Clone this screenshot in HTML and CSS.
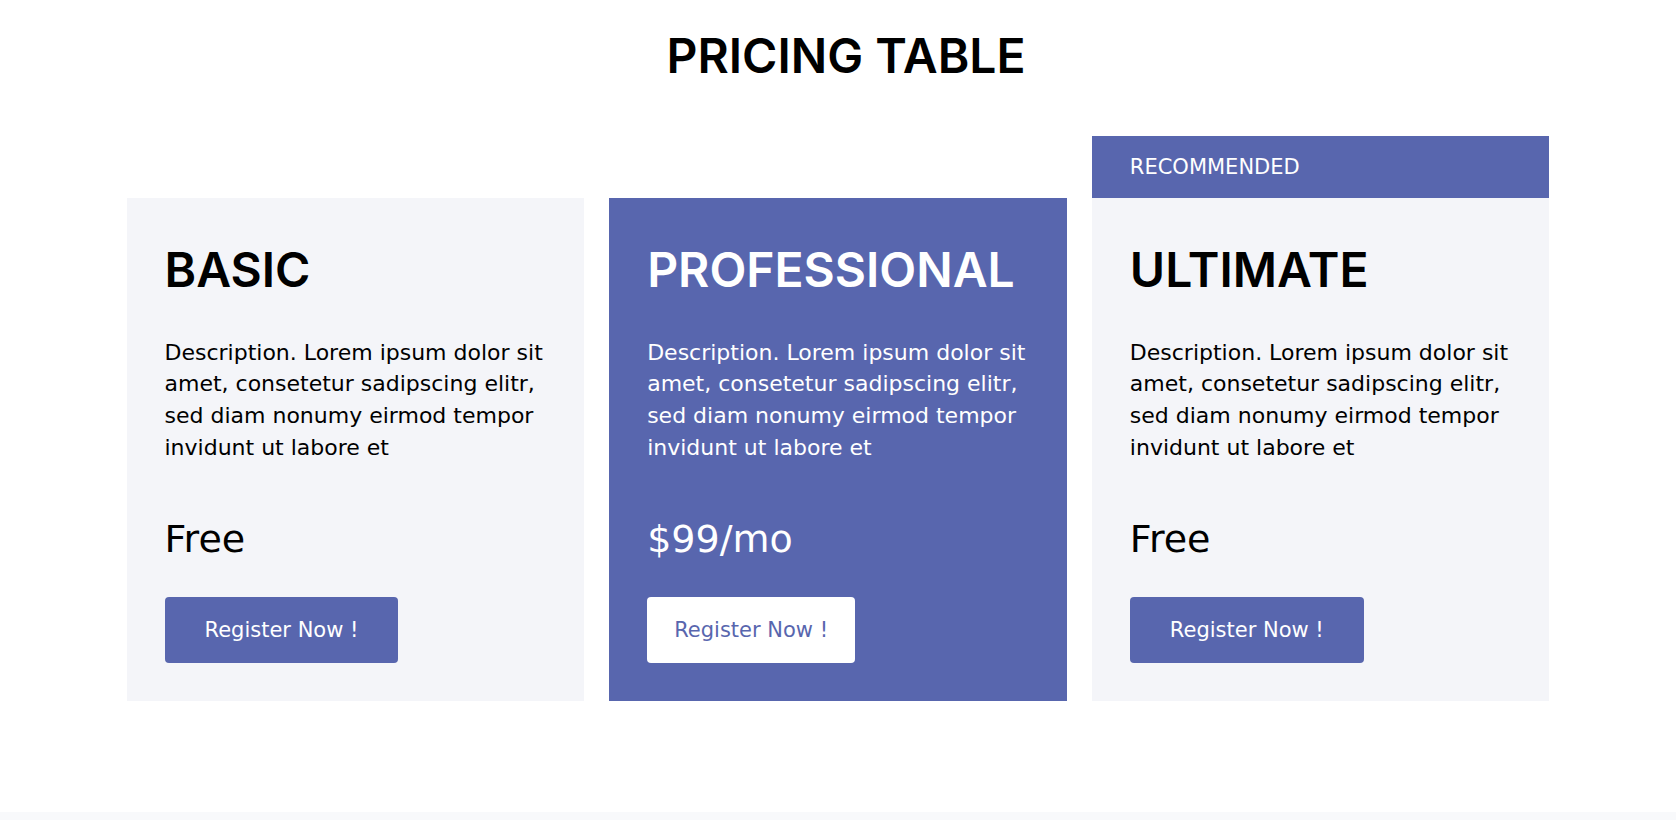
FILE: index.html
```html
<!DOCTYPE html>
<html lang="en">
<head>
<meta charset="utf-8">
<title>Pricing Table</title>
<link rel="stylesheet" href="styles.css">
</head>
<body>
<main class="page">
  <h1 class="page-title">PRICING TABLE</h1>
  <div class="plans">
    <div class="plan-col">
      <div class="plan">
        <h2 class="plan-name">BASIC</h2>
        <p class="plan-desc">Description. Lorem ipsum dolor sit amet, consetetur sadipscing elitr, sed diam nonumy eirmod tempor invidunt ut labore et</p>
        <div class="plan-price">Free</div>
        <a class="btn" href="#">Register Now !</a>
      </div>
    </div>
    <div class="plan-col">
      <div class="plan plan-featured">
        <h2 class="plan-name">PROFESSIONAL</h2>
        <p class="plan-desc">Description. Lorem ipsum dolor sit amet, consetetur sadipscing elitr, sed diam nonumy eirmod tempor invidunt ut labore et</p>
        <div class="plan-price">$99/mo</div>
        <a class="btn btn-light" href="#">Register Now !</a>
      </div>
    </div>
    <div class="plan-col">
      <div class="plan-badge">RECOMMENDED</div>
      <div class="plan">
        <h2 class="plan-name">ULTIMATE</h2>
        <p class="plan-desc">Description. Lorem ipsum dolor sit amet, consetetur sadipscing elitr, sed diam nonumy eirmod tempor invidunt ut labore et</p>
        <div class="plan-price">Free</div>
        <a class="btn" href="#">Register Now !</a>
      </div>
    </div>
  </div>
</main>
<footer class="footer"></footer>
</body>
</html>
```

FILE: styles.css
```css
* { box-sizing: border-box; }

html, body {
  margin: 0;
  padding: 0;
  background: #ffffff;
}

body {
  font-family: "DejaVu Sans", "Liberation Sans", sans-serif;
  color: #000000;
}

.page {
  min-height: 812px;
  padding-top: 28px;
}

.page-title {
  margin: 0;
  padding-left: 16px;
  text-align: center;
  font-family: "Inter", "DejaVu Sans", sans-serif;
  font-size: 48px;
  line-height: 56px;
  font-weight: 600;
  color: #000;
}

.plans {
  width: 1423px;
  margin: 52px auto 0;
  display: grid;
  grid-template-columns: repeat(3, 1fr);
  column-gap: 25px;
  align-items: end;
}

.plan-col {
  display: flex;
  flex-direction: column;
}

.plan-badge {
  height: 62px;
  line-height: 62px;
  padding-left: 38px;
  background: #5866ae;
  color: #ffffff;
  font-size: 21px;
}

.plan {
  background: #f4f5f9;
  padding: 44px 34px 38px 38px;
  height: 503px;
  display: flex;
  flex-direction: column;
  align-items: flex-start;
}

.plan-featured {
  background: #5866ae;
  color: #ffffff;
}

.plan-name {
  margin: 0;
  font-family: "Inter", "DejaVu Sans", sans-serif;
  font-size: 48px;
  line-height: 56px;
  font-weight: 600;
}

.plan-desc {
  margin: 38.6px 0 0;
  font-size: 22px;
  line-height: 31.7px;
}

.plan-price {
  margin-top: 53px;
  font-size: 38px;
  line-height: 46px;
}

.btn {
  margin-top: 34.5px;
  display: inline-block;
  padding: 20px 40px;
  font-size: 21px;
  line-height: 26px;
  background: #5866ae;
  color: #ffffff;
  text-decoration: none;
  border-radius: 4px;
}

.btn-light {
  background: #ffffff;
  color: #5866ae;
  padding: 20px 27px;
}

.footer {
  height: 40px;
  background: #f8f9fb;
}
```
